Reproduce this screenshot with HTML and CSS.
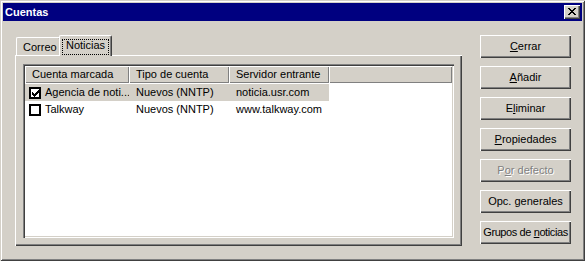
FILE: index.html
```html
<!DOCTYPE html>
<html lang="es">
<head>
<meta charset="utf-8">
<title>Cuentas</title>
<link rel="stylesheet" href="styles.css">
</head>
<body>
<div class="window">
  <div class="titlebar">
    <span class="title">Cuentas</span>
    <div class="close">
      <svg width="8" height="7" viewBox="0 0 8 7"><path fill="#000" d="M0 0h2v1h-2z M6 0h2v1h-2z M1 1h2v1h-2z M5 1h2v1h-2z M2 2h4v1h-4z M3 3h2v1h-2z M2 4h4v1h-4z M1 5h2v1h-2z M5 5h2v1h-2z M0 6h2v1h-2z M6 6h2v1h-2z"/></svg>
    </div>
  </div>
  <div class="content">
    <div class="tabctl">
      <div class="tabrow">
        <div class="tab">Correo</div>
        <div class="tab active"><span class="focus">Noticias</span></div>
      </div>
      <div class="panel">
        <div class="listview">
          <div class="header">
            <div class="hcell c1">Cuenta marcada</div>
            <div class="hcell c2">Tipo de cuenta</div>
            <div class="hcell c3">Servidor entrante</div>
            <div class="hcell fill"></div>
          </div>
          <div class="row selected">
            <div class="cell c1"><span class="check"><svg width="7" height="7" viewBox="0 0 7 7"><path fill="#000" d="M0 2h1v3h-1z M1 3h1v3h-1z M2 4h1v3h-1z M3 3h1v3h-1z M4 2h1v3h-1z M5 1h1v3h-1z M6 0h1v3h-1z"/></svg></span>Agencia de noti...</div>
            <div class="cell c2">Nuevos (NNTP)</div>
            <div class="cell c3">noticia.usr.com</div>
          </div>
          <div class="row">
            <div class="cell c1"><span class="check"></span>Talkway</div>
            <div class="cell c2">Nuevos (NNTP)</div>
            <div class="cell c3">www.talkway.com</div>
          </div>
        </div>
      </div>
    </div>
    <div class="buttons">
      <div class="btn"><u>C</u>errar</div>
      <div class="btn"><u>A</u>ñadir</div>
      <div class="btn">E<u>l</u>iminar</div>
      <div class="btn"><u>P</u>ropiedades</div>
      <div class="btn disabled">P<u>o</u>r defecto</div>
      <div class="btn">Opc. <u>g</u>enerales</div>
      <div class="btn tight">Grupos de <u>n</u>oticias</div>
    </div>
  </div>
</div>
</body>
</html>
```

FILE: styles.css
```css
html, body {
  margin: 0;
  padding: 0;
  background: #d4d0c8;
}

body {
  font-family: "Liberation Sans", Arial, sans-serif;
  font-size: 11px;
  color: #000;
}

.window {
  width: 585px;
  height: 261px;
  box-sizing: border-box;
  padding: 3px;
  background: #d4d0c8;
  box-shadow: inset 1px 1px #d4d0c8, inset -1px -1px #404040, inset 2px 2px #fff, inset -2px -2px #808080;
  display: flex;
  flex-direction: column;
}

.titlebar {
  height: 18px;
  background: #000080;
  display: flex;
  align-items: flex-start;
}

.title {
  color: #fff;
  font-weight: bold;
  line-height: 18px;
  padding-left: 2px;
}

.close {
  width: 16px;
  height: 14px;
  margin: 2px 2px 0 auto;
  box-sizing: border-box;
  background: #d4d0c8;
  box-shadow: inset 1px 1px #fff, inset -1px -1px #404040, inset -2px -2px #808080;
  padding: 3px 0 0 4px;
  display: flex;
  align-items: flex-start;
}

.close svg, .check svg {
  display: block;
}

.content {
  display: flex;
  gap: 18px;
  padding: 14px 11px 0 12px;
}

.tabctl {
  width: 447px;
  display: flex;
  flex-direction: column;
}

.tabrow {
  height: 20px;
  display: flex;
  align-items: flex-end;
  padding-left: 1px;
}

.tab {
  width: 45px;
  height: 18px;
  box-sizing: border-box;
  border-top: 1px solid #fff;
  border-left: 1px solid #fff;
  border-right: 1px solid #404040;
  border-radius: 2px 2px 0 0;
  box-shadow: inset -1px 0 #808080;
  padding: 1px 0 0 6px;
  line-height: 16px;
  white-space: nowrap;
}

.tab.active {
  width: 53px;
  height: 21px;
  margin: 0 0 -1px -2px;
  padding: 3px 0 0 0;
  background: #d4d0c8;
  position: relative;
  z-index: 1;
  display: flex;
  justify-content: center;
  align-items: flex-start;
}

.focus {
  border: 1px dotted #000;
  padding: 0 3px 0 3px;
  height: 14px;
  line-height: 11px;
}

.panel {
  height: 191px;
  box-sizing: border-box;
  padding: 9px 8px 8px 8px;
  box-shadow: inset 1px 1px #fff, inset -1px -1px #404040, inset -2px -2px #808080;
  display: flex;
}

.listview {
  flex: 1;
  background: #fff;
  padding: 2px;
  box-shadow: inset 1px 1px #808080, inset 2px 2px #404040, inset -1px -1px #fff, inset -2px -2px #d4d0c8;
  display: flex;
  flex-direction: column;
}

.header {
  display: flex;
  height: 17px;
}

.hcell {
  box-sizing: border-box;
  background: #d4d0c8;
  box-shadow: inset 1px 1px #fff, inset -1px -1px #808080;
  padding-left: 7px;
  line-height: 17px;
  white-space: nowrap;
  overflow: hidden;
}

.c1 { width: 104px; }
.c2 { width: 100px; }
.c3 { width: 100px; }
.hcell.fill { flex: 1; }

.row {
  display: flex;
  height: 17px;
  margin-top: 1px;
}

.row + .row {
  margin-top: 0;
}

.row.selected .cell {
  background: #d4d0c8;
}

.cell {
  box-sizing: border-box;
  padding-left: 7px;
  line-height: 17px;
  white-space: nowrap;
  overflow: hidden;
  display: flex;
  align-items: center;
}

.cell.c1 {
  padding-left: 4px;
}

.check {
  width: 12px;
  height: 12px;
  box-sizing: border-box;
  border: 2px solid #000;
  background: #fff;
  margin-right: 4px;
  padding: 1px 0 0 1px;
}

.buttons {
  width: 91px;
  display: flex;
  flex-direction: column;
  gap: 8px;
}

.btn {
  height: 23px;
  box-sizing: border-box;
  padding: 0 2px;
  background: #d4d0c8;
  box-shadow: inset 1px 1px #fff, inset -1px -1px #404040, inset -2px -2px #808080;
  line-height: 23px;
  text-align: center;
  white-space: nowrap;
  overflow: hidden;
}

.btn.tight {
  padding: 0 1px;
  letter-spacing: -0.4px;
}

.btn.disabled {
  color: #808080;
  text-shadow: 1px 1px #fff;
}
```
